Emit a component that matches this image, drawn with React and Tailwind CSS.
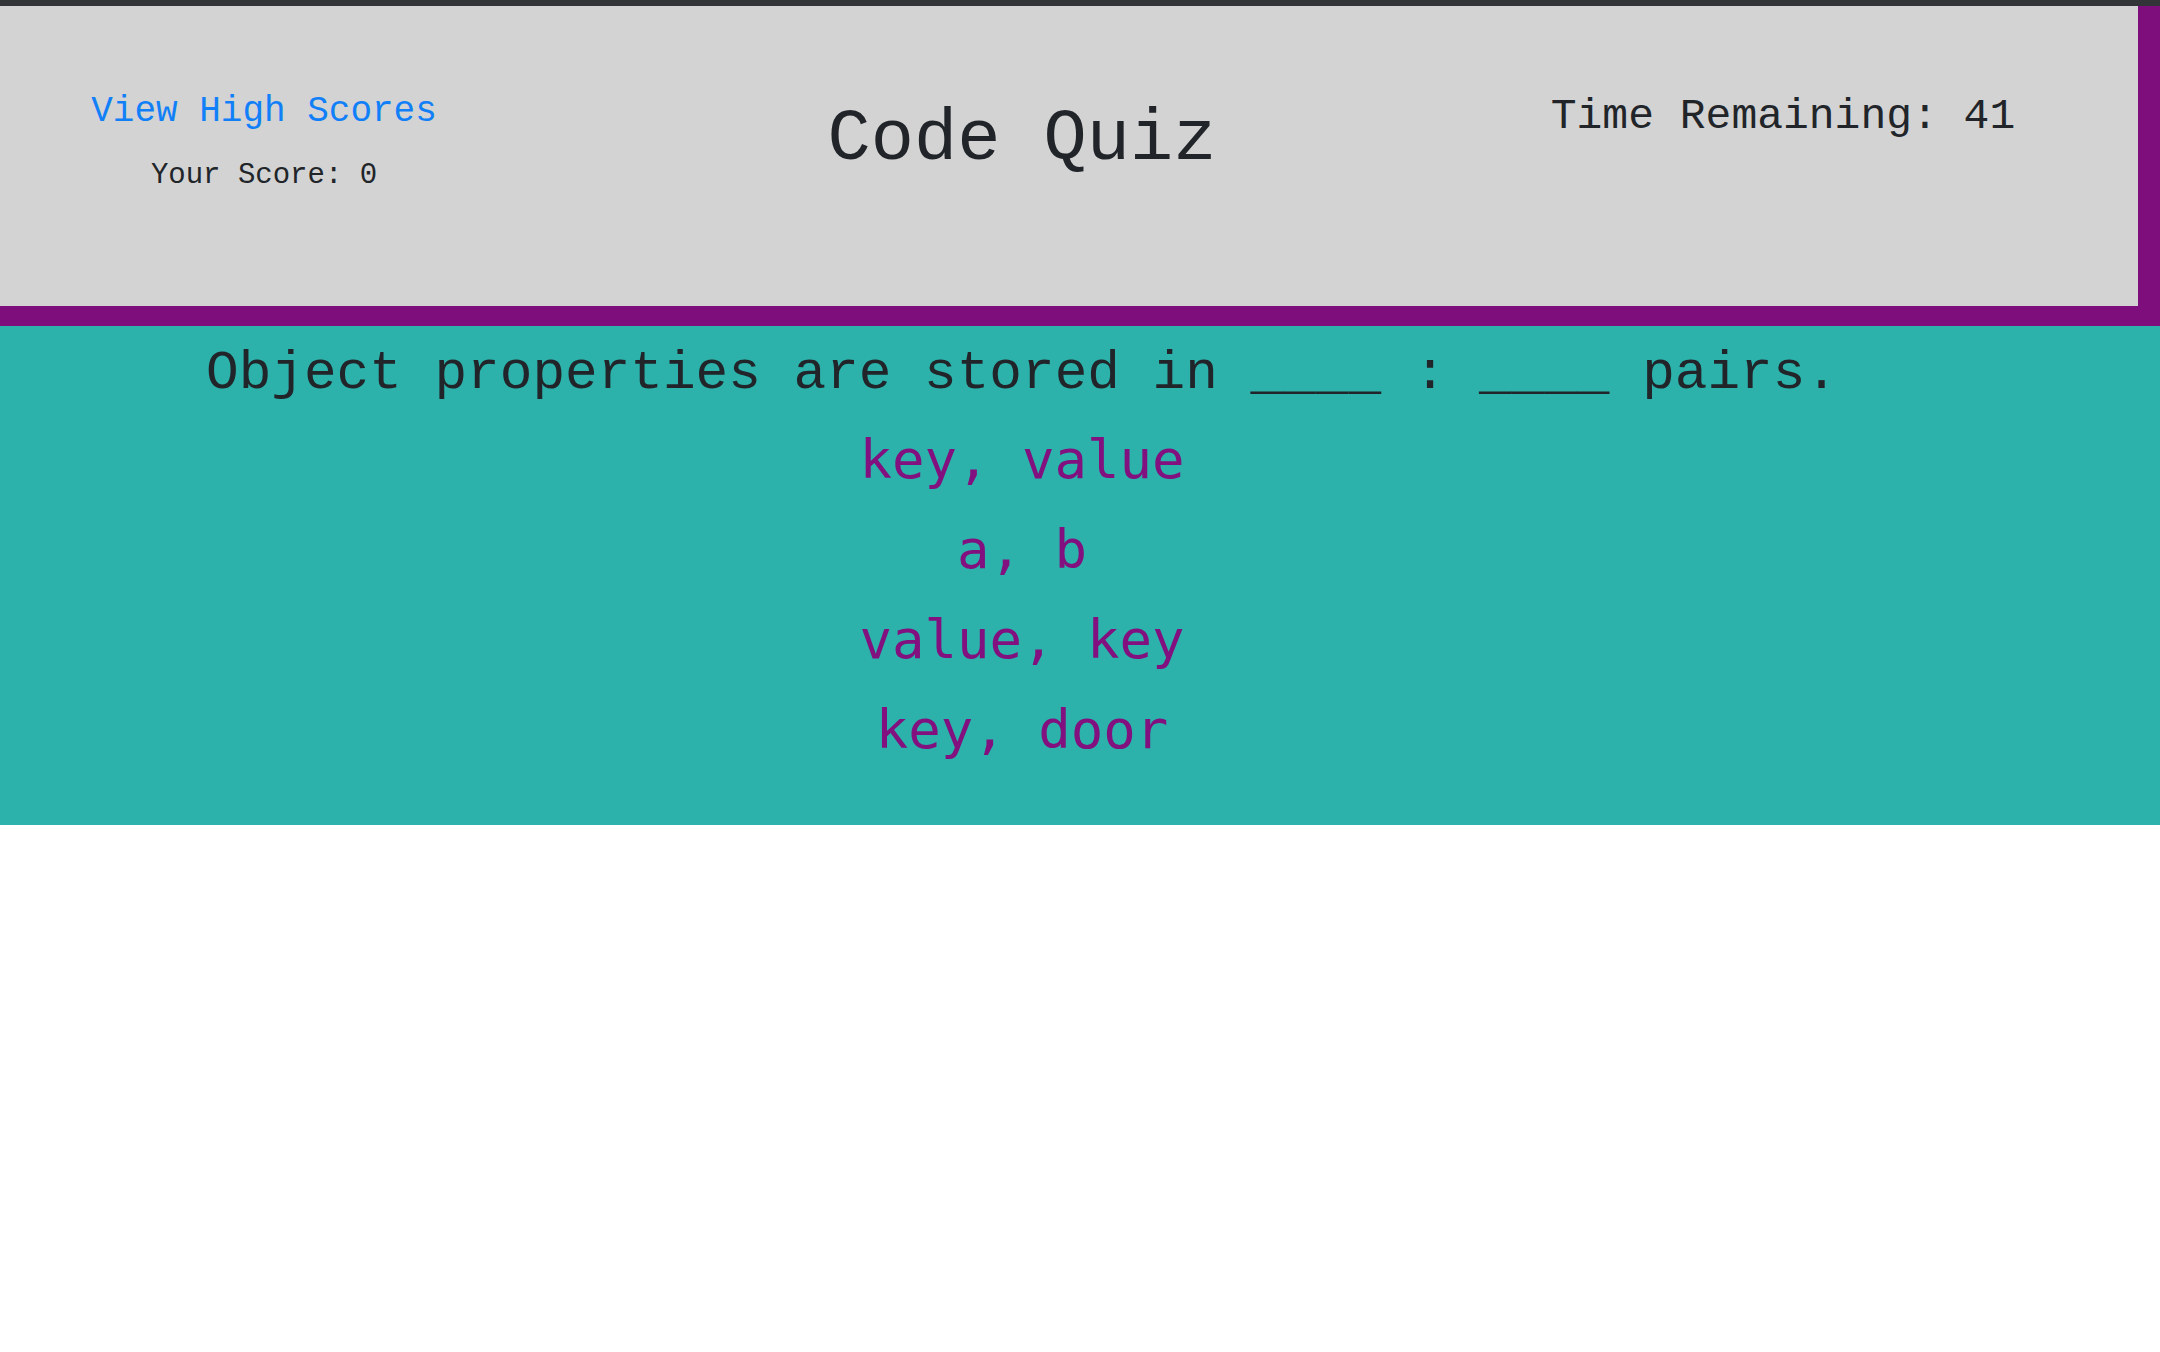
import React from 'react';

const answers = ['key, value', 'a, b', 'value, key', 'key, door'];

export default function App() {
  return (
    <div className="min-h-screen bg-white">
      <div className="h-[6px] bg-[#333437]" />

      {/* Header */}
      <header
        className="h-[320px] bg-[#d3d3d3] border-r-[22px] border-b-[20px] border-[#7f0e7d] grid grid-cols-[528px_988px_534px] text-[#212529]"
        style={{ fontFamily: '"Liberation Mono", monospace' }}
      >
        <div className="pt-[88px] text-center">
          <a href="#" className="block text-[36px] leading-none text-[#1180f8]">View High Scores</a>
          <div className="mt-[31px] text-[29px] leading-none">Your Score: 0</div>
        </div>
        <div className="pt-[98px] text-center">
          <h1 className="text-[72px] leading-none">Code Quiz</h1>
        </div>
        <div className="pt-[89px] text-center">
          <div className="text-[43px] leading-none">Time Remaining: 41</div>
        </div>
      </header>

      {/* Question */}
      <main className="bg-[#2cb1ab] pt-[21px] pb-[50px] pr-[116px] text-center">
        <h2
          className="text-[54.4px] leading-none text-[#212529]"
          style={{ fontFamily: '"Liberation Mono", monospace' }}
        >
          Object properties are stored in ____ : ____ pairs.
        </h2>
        <div className="mt-[14px] flex flex-col items-center" style={{ fontFamily: '"DejaVu Sans Mono", monospace' }}>
          {answers.map((a) => (
            <button key={a} className="text-[54px] leading-[90px] text-[#82107f] bg-transparent">
              {a}
            </button>
          ))}
        </div>
      </main>
    </div>
  );
}
